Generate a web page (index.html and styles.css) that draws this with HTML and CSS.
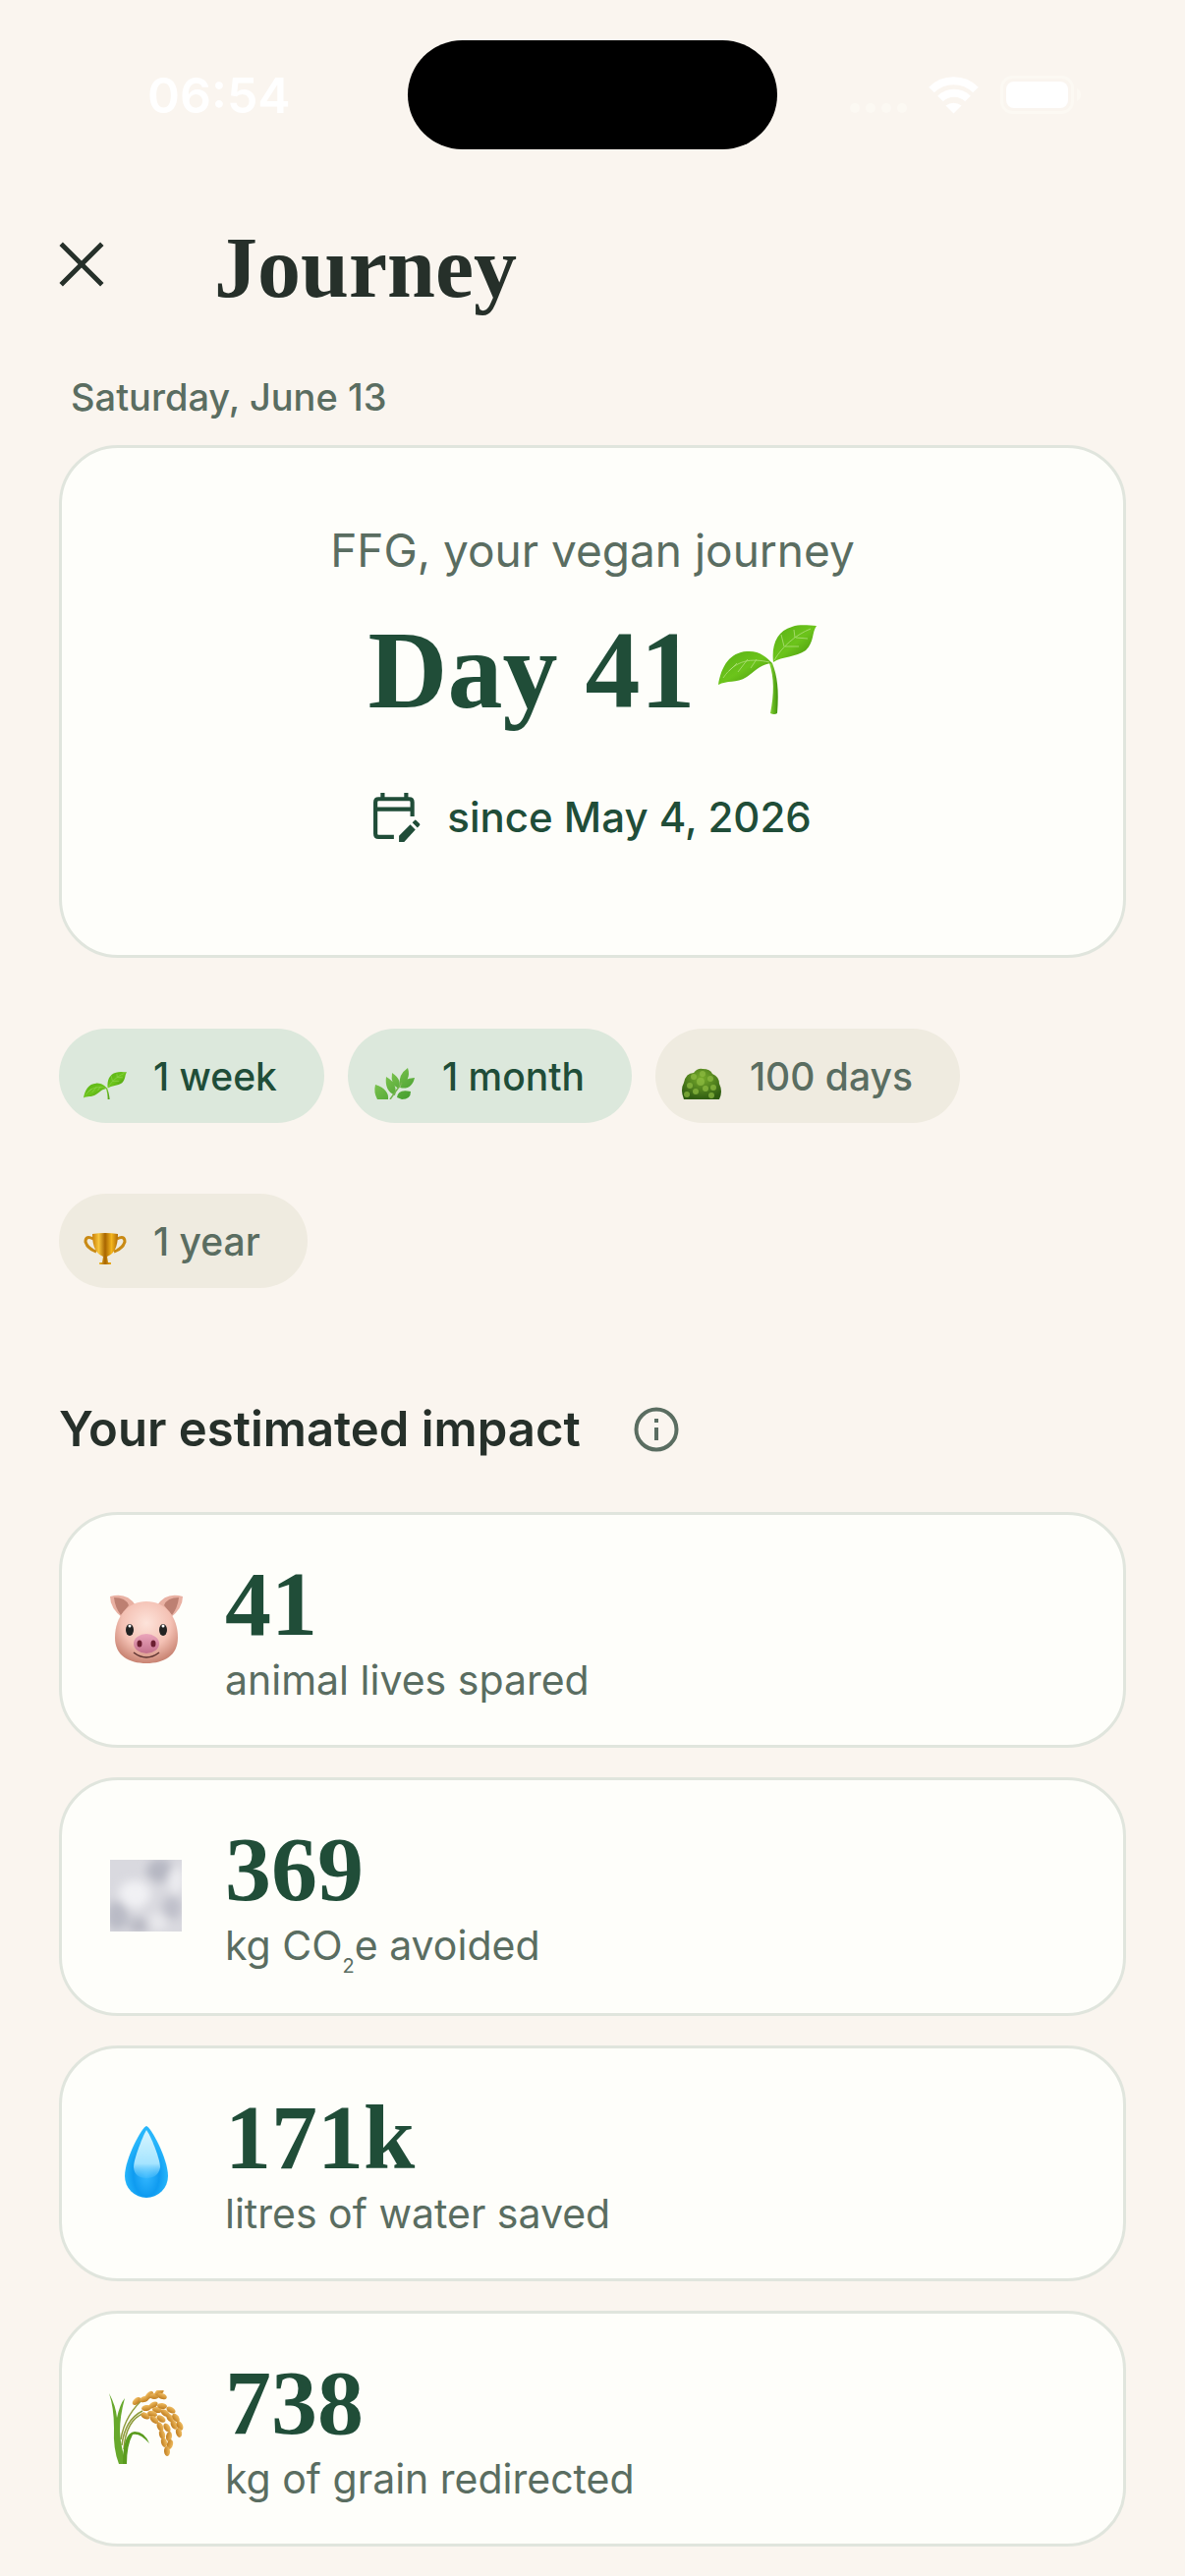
FILE: index.html
```html
<!DOCTYPE html>
<html lang="en">
<head>
<meta charset="utf-8">
<title>Journey</title>
<meta name="viewport" content="width=device-width">
<link rel="stylesheet" href="styles.css">
</head>
<body>
<svg class="defs" aria-hidden="true">
  <defs>
    <linearGradient id="leaf" x1="0" y1="0" x2="1" y2="1"><stop offset="0" stop-color="#58b015"/><stop offset=".5" stop-color="#6cc41b"/><stop offset="1" stop-color="#3f8a08"/></linearGradient>
    <linearGradient id="stem" x1="0" x2="1" y1="0" y2="0"><stop offset="0" stop-color="#8ad837"/><stop offset="1" stop-color="#3f920a"/></linearGradient>
    <linearGradient id="herb" x1="0" y1="0" x2="1" y2="1"><stop offset="0" stop-color="#8fd05a"/><stop offset="1" stop-color="#3f9a2b"/></linearGradient>
    <radialGradient id="tree" cx=".5" cy=".3" r=".7"><stop offset="0" stop-color="#78ac2c"/><stop offset="1" stop-color="#2f5c12"/></radialGradient>
    <linearGradient id="gold" x1="0" x2="1" y1="0" y2="0"><stop offset="0" stop-color="#c97f08"/><stop offset=".25" stop-color="#f7c53c"/><stop offset=".5" stop-color="#a86500"/><stop offset=".75" stop-color="#f3b51e"/><stop offset="1" stop-color="#b06b02"/></linearGradient>
    <radialGradient id="skin" cx=".5" cy=".35" r=".65"><stop offset="0" stop-color="#fde3da"/><stop offset=".6" stop-color="#f4c1b4"/><stop offset="1" stop-color="#c98473"/></radialGradient>
    <linearGradient id="snout" x1="0" y1="0" x2="0" y2="1"><stop offset="0" stop-color="#eba6bb"/><stop offset="1" stop-color="#c3708c"/></linearGradient>
    <radialGradient id="drop" cx=".5" cy=".68" r=".5"><stop offset="0" stop-color="#35b8ff"/><stop offset=".6" stop-color="#0f9bf0"/><stop offset="1" stop-color="#27b6fb"/></radialGradient>
    <linearGradient id="shine" x1="0" y1="0" x2="0" y2="1"><stop offset="0" stop-color="#d9f6ff"/><stop offset=".7" stop-color="#a5e4ff"/><stop offset="1" stop-color="#6fd0ff" stop-opacity=".2"/></linearGradient>
    <linearGradient id="grain" x1="0" y1="0" x2="0" y2="1"><stop offset="0" stop-color="#f0bd62"/><stop offset="1" stop-color="#bf7c1e"/></linearGradient>
    <filter id="soft" x="-50%" y="-50%" width="200%" height="200%"><feGaussianBlur stdDeviation="5"/></filter>
    <clipPath id="fogbox"><rect x="1" y="1" width="73" height="73"/></clipPath>
    <symbol id="seedling" viewBox="0 0 100 92">
      <path d="M55 39C60 52 62 66 60 90Q57 92 53 90C57 70 57 54 52 39Z" fill="url(#stem)"/>
      <path d="M0 61C3 42 12 28 29 27C42 26 49 33 55 39C43 40 39 46 29 53C18 60 9 56 0 61Z" fill="url(#leaf)"/>
      <path d="M56 38C54 20 60 6 75 2C84 -1 93 1 100 1C95 8 98 17 89 26C79 33 65 32 56 38Z" fill="url(#leaf)"/>
      <path d="M5 54C18 35 34 34 52 38M19 39l-8 8M30 35l-10 13M39 35l-6 9M57 36C65 22 79 10 94 4M67 22l-3-12M78 13l-1-8M68 22l14 0M79 13l12 1" fill="none" stroke="#b5e282" stroke-width="1" opacity=".75"/>
    </symbol>
    <ellipse id="seed" rx="5" ry="3" fill="url(#grain)"/>
  </defs>
</svg>

<div class="status">
  <time class="clock">06:54</time>
  <div class="island"></div>
  <svg class="status-icons" viewBox="0 0 236 40" aria-hidden="true">
    <g fill="#fcf9f3"><circle cx="6" cy="33" r="5"/><circle cx="22" cy="33" r="5"/><circle cx="38" cy="33" r="5"/><circle cx="54" cy="33" r="5"/></g>
    <g fill="none" stroke="#fff" stroke-width="8"><path d="M84 14.500a32 32 0 0 1 45 0"/><path d="M93 23.500a20 20 0 0 1 28 0"/></g>
    <path d="M98.500 30.500a13 13 0 0 1 16 0L106.500 38.500Z" fill="#fff"/>
    <rect x="155.500" y="1.500" width="72" height="36" rx="11" fill="none" stroke="#fcf9f3" stroke-width="3"/>
    <rect x="160" y="6" width="63" height="27" rx="8" fill="#fff"/>
    <path d="M232 13q4 2 4 6.500t-4 6.500Z" fill="#fcf9f3"/>
  </svg>
</div>

<header class="topbar">
  <button class="close" aria-label="Close"><svg viewBox="0 0 42 42"><path d="M2 2L40 40M40 2L2 40" stroke="#26302a" stroke-width="4.500"/></svg></button>
  <h1>Journey</h1>
</header>

<main>
  <p class="date">Saturday, June 13</p>

  <section class="card hero">
    <p class="hero-lead">FFG, your vegan journey</p>
    <p class="hero-day">Day 41 <svg class="sprout" role="img" aria-label="Seedling"><use href="#seedling"/></svg></p>
    <button class="since">
      <svg viewBox="0 0 46 48" aria-hidden="true"><path d="M20 43H5Q2 43 2 40V9Q2 6 5 6H35Q38 6 38 9V23M2 16H38M9 0V7M32 0V7" fill="none" stroke="#204d38" stroke-width="4"/><path d="M25 42L36 31L41 36L30 48H25ZM38 29l2-2q1-1 2 0l3 3q1 1 0 2l-2 2Z" fill="#204d38"/></svg>
      since May 4, 2026
    </button>
  </section>

  <ul class="badges">
    <li class="badge earned"><svg viewBox="0 0 44 32" aria-hidden="true"><use href="#seedling" y="3" width="44" height="42"/></svg>1 week</li>
    <li class="badge earned"><svg viewBox="0 0 44 32" aria-hidden="true"><g fill="url(#herb)"><path d="M3 17C13 20 17 26 16 32H5Q1 25 3 17ZM14 9C23 14 25 21 23 28Q12 23 14 9ZM20 5C28 10 29 16 27 21Q18 17 20 5ZM36 0C39 9 35 15 28 17Q26 7 36 0ZM43 10C41 19 35 22 28 20Q31 10 43 10ZM25 30Q26 21 39 24Q39 32 30 32Z"/></g><path d="M18 32L30 15" stroke="#72b34b" stroke-width="1.500"/></svg>1 month</li>
    <li class="badge"><svg viewBox="0 0 44 32" aria-hidden="true"><path d="M4 32Q0 22 4 15Q6 5 14 5Q18 0 23 1Q31 1 33 6Q40 9 40 16Q44 24 40 32Z" fill="url(#tree)"/><g fill="#8fbd42" opacity=".7"><circle cx="14" cy="9" r="3"/><circle cx="23" cy="6" r="3"/><circle cx="31" cy="11" r="3"/><circle cx="21" cy="14" r="4"/><circle cx="10" cy="18" r="3"/><circle cx="34" cy="20" r="3"/><circle cx="26" cy="21" r="3"/><circle cx="16" cy="24" r="3"/><circle cx="7" cy="27" r="3"/><circle cx="32" cy="28" r="3"/></g></svg>100 days</li>
    <li class="badge"><svg viewBox="0 0 44 32" aria-hidden="true"><path d="M10 6Q2 2 2 9Q4 16 13 19M34 6Q42 2 42 9Q40 16 31 19" fill="none" stroke="#c98a14" stroke-width="3"/><path d="M9 1Q22 -1 35 1Q35 20 24 24L25 30H28V32H16V30H19L20 24Q9 20 9 1Z" fill="url(#gold)"/></svg>1 year</li>
  </ul>

  <div class="section-head">
    <h2>Your estimated impact</h2>
    <button class="info" aria-label="About these estimates"><svg viewBox="0 0 46 46"><circle cx="23" cy="23" r="20.500" fill="none" stroke="#5a6d61" stroke-width="4"/><path d="M23 21V34M23 12V16" stroke="#5a6d61" stroke-width="4"/></svg></button>
  </div>

  <ul class="stats">
    <li class="card stat">
      <svg viewBox="0 0 76 76" aria-hidden="true"><path d="M1 5Q18 0 27 14L14 27Q1 17 1 5ZM75 5Q58 0 49 14L62 27Q75 17 75 5Z" fill="#e9b1a3"/><path d="M5 6Q17 6 20 14L12 24Q6 16 5 6ZM71 6Q59 6 56 14L64 24Q70 16 71 6Z" fill="#bd8072"/><path d="M38 10C57 10 70 25 70 47C70 65 56 73 38 73S6 65 6 47C6 25 19 10 38 10Z" fill="url(#skin)"/><ellipse cx="21" cy="39" rx="4" ry="6" fill="#222"/><ellipse cx="55" cy="39" rx="4" ry="6" fill="#222"/><circle cx="21" cy="35" r="1.500" fill="#fff"/><circle cx="55" cy="35" r="1.500" fill="#fff"/><ellipse cx="38" cy="53" rx="13" ry="10" fill="url(#snout)"/><ellipse cx="31" cy="53" rx="2.500" ry="3.500" fill="#6b1f30"/><ellipse cx="45" cy="53" rx="2.500" ry="3.500" fill="#6b1f30"/><path d="M25 62Q38 72 51 62" fill="none" stroke="#5c3330" stroke-width="1.500"/></svg>
      <div><strong>41</strong><span>animal lives spared</span></div>
    </li>
    <li class="card stat">
      <svg viewBox="0 0 76 76" aria-hidden="true"><g clip-path="url(#fogbox)"><rect width="76" height="76" fill="#d9d9df"/><g filter="url(#soft)"><ellipse cx="52" cy="12" rx="14" ry="12" fill="#b6b7c2"/><ellipse cx="8" cy="58" rx="12" ry="15" fill="#babbc6"/><ellipse cx="64" cy="50" rx="10" ry="12" fill="#bfc0ca"/><ellipse cx="30" cy="68" rx="10" ry="8" fill="#b9bac4"/><ellipse cx="26" cy="36" rx="16" ry="14" fill="#f1f1f4"/><ellipse cx="68" cy="22" rx="8" ry="14" fill="#ececf0"/><ellipse cx="50" cy="64" rx="10" ry="9" fill="#e8e8ec"/></g></g></svg>
      <div><strong>369</strong><span>kg CO<sub>2</sub>e avoided</span></div>
    </li>
    <li class="card stat">
      <svg viewBox="0 0 76 76" aria-hidden="true"><path d="M38 1C42 1 60 34 60 52A22 22 0 0 1 16 52C16 34 34 1 38 1Z" fill="url(#drop)"/><path d="M38 5C42 10 52 34 52 43Q50 54 38 54T25 43C25 34 35 10 38 5Z" fill="url(#shine)"/></svg>
      <div><strong>171k</strong><span>litres of water saved</span></div>
    </li>
    <li class="card stat">
      <svg viewBox="0 0 76 76" aria-hidden="true">
        <path d="M12 50Q16 24 38 6M13 56Q16 30 34 21M15 60Q17 30 36 23" fill="none" stroke="#8f9c3c" stroke-width="1.500"/>
        <path d="M0 3Q7 16 8 28Q11 14 16 8Q11 26 11 42Q12 60 18 75H10Q4 60 5 38Q5 18 0 3Z" fill="#67a82b"/>
        <path d="M14 75Q14 43 26 42Q36 42 41 54Q31 43 24 45Q18 56 18 75Z" fill="#5a9c1e"/>
        <use href="#seed" transform="translate(28 11) rotate(-40)"/><use href="#seed" transform="translate(36 9) rotate(-20)"/><use href="#seed" transform="translate(41 5) rotate(-45)"/><use href="#seed" transform="translate(46 6) rotate(0)"/><use href="#seed" transform="translate(51 2) rotate(-30)"/><use href="#seed" transform="translate(54 6) rotate(20)"/>
        <use href="#seed" transform="translate(38 18) rotate(-10)"/><use href="#seed" transform="translate(45 15) rotate(-30)"/><use href="#seed" transform="translate(49 20) rotate(10)"/><use href="#seed" transform="translate(54 16) rotate(5)"/><use href="#seed" transform="translate(57 23) rotate(35)"/><use href="#seed" transform="translate(63 20) rotate(30)"/><use href="#seed" transform="translate(62 28) rotate(55)"/><use href="#seed" transform="translate(68 28) rotate(55)"/><use href="#seed" transform="translate(66 35) rotate(65)"/><use href="#seed" transform="translate(72 36) rotate(65)"/><use href="#seed" transform="translate(71 43) rotate(75)"/>
        <use href="#seed" transform="translate(37 26) rotate(25)"/><use href="#seed" transform="translate(44 24) rotate(15)"/><use href="#seed" transform="translate(46 30) rotate(40)"/><use href="#seed" transform="translate(53 29) rotate(35)"/><use href="#seed" transform="translate(52 37) rotate(65)"/><use href="#seed" transform="translate(59 38) rotate(60)"/><use href="#seed" transform="translate(54 45) rotate(75)"/><use href="#seed" transform="translate(61 47) rotate(100)"/><use href="#seed" transform="translate(56 53) rotate(75)"/><use href="#seed" transform="translate(62 55) rotate(105)"/><use href="#seed" transform="translate(59 62) rotate(85)"/>
      </svg>
      <div><strong>738</strong><span>kg of grain redirected</span></div>
    </li>
  </ul>
</main>
</body>
</html>
```

FILE: styles.css
```css
* { box-sizing: border-box; }

body {
  margin: 0;
  padding: 0 60px 30px;
  background: #faf5ef;
  color: #26302a;
  font-family: Inter, "Liberation Sans", sans-serif;
  font-optical-sizing: none;
}

h1, h2, p, ul { margin: 0; padding: 0; }
ul { list-style: none; }
svg { display: block; flex: none; }
button {
  padding: 0;
  border: 0;
  background: none;
  color: inherit;
  font: inherit;
}
.defs { position: absolute; width: 0; height: 0; }

.status {
  display: grid;
  grid-template-columns: 1fr 376px 1fr;
  align-items: center;
  padding-top: 41px;
}
.clock {
  padding-left: 90px;
  color: #fff;
  font-size: 50px;
  font-weight: 600;
}
.island { height: 111px; border-radius: 56px; background: #000; }
.status-icons { width: 236px; height: 40px; justify-self: end; margin-right: 46px; }

.topbar {
  display: flex;
  align-items: center;
  gap: 112px;
  height: 230px;
}
.close { padding-top: 4px; }
.close svg { width: 46px; height: 46px; }
h1 {
  padding-top: 12px;
  font-family: "Liberation Serif", serif;
  font-size: 88px;
  line-height: 96px;
}

.date {
  padding-left: 12px;
  margin-bottom: 27px;
  color: #5a6d61;
  font-size: 38px;
  font-weight: 500;
  line-height: 44px;
}

.card {
  border: 3px solid #e0e5dd;
  border-radius: 60px;
  background: #fefefa;
}

.hero {
  display: flex;
  flex-direction: column;
  align-items: center;
  padding: 72px 0 110px;
}
.hero-lead {
  margin-bottom: 30px;
  color: #5a6d61;
  font-size: 46px;
  line-height: 64px;
}
.hero-day {
  display: flex;
  align-items: center;
  gap: 24px;
  margin-bottom: 60px;
  color: #204d38;
  font-family: "Liberation Serif", serif;
  font-size: 112px;
  font-weight: 700;
  line-height: 120px;
}
.sprout { width: 100px; height: 92px; }
.since {
  display: flex;
  align-items: center;
  gap: 27px;
  color: #204d38;
  font-size: 42px;
  font-weight: 500;
  line-height: 60px;
}
.since svg { width: 48px; height: 50px; }

.badges {
  display: flex;
  flex-wrap: wrap;
  gap: 72px 24px;
  margin-top: 72px;
}
.badge {
  display: flex;
  align-items: center;
  gap: 27px;
  height: 96px;
  padding: 0 48px 0 25px;
  border-radius: 48px;
  background: #efebe0;
  color: #5a6d61;
  font-size: 39px;
  font-weight: 500;
}
.badge svg { width: 44px; height: 32px; margin-top: 16px; }
.earned { background: #dce8dc; color: #204d38; }

.section-head {
  display: flex;
  align-items: center;
  gap: 54px;
  margin: 108px 0 48px;
}
h2 { font-size: 49px; font-weight: 600; line-height: 72px; }
.info svg { width: 46px; height: 46px; }

.stats { display: grid; gap: 30px; }
.stat {
  display: flex;
  align-items: center;
  gap: 42px;
  padding: 42px 48px 36px;
}
.stat svg { width: 76px; height: 76px; margin-bottom: 8px; }
.stat strong {
  display: block;
  color: #204d38;
  font-family: "Liberation Serif", serif;
  font-size: 94px;
  line-height: 96px;
}
.stat span {
  display: block;
  color: #5a6d61;
  font-size: 41px;
  line-height: 60px;
}
.stat sub { font-size: 20px; line-height: 24px; vertical-align: -13px; }
```
